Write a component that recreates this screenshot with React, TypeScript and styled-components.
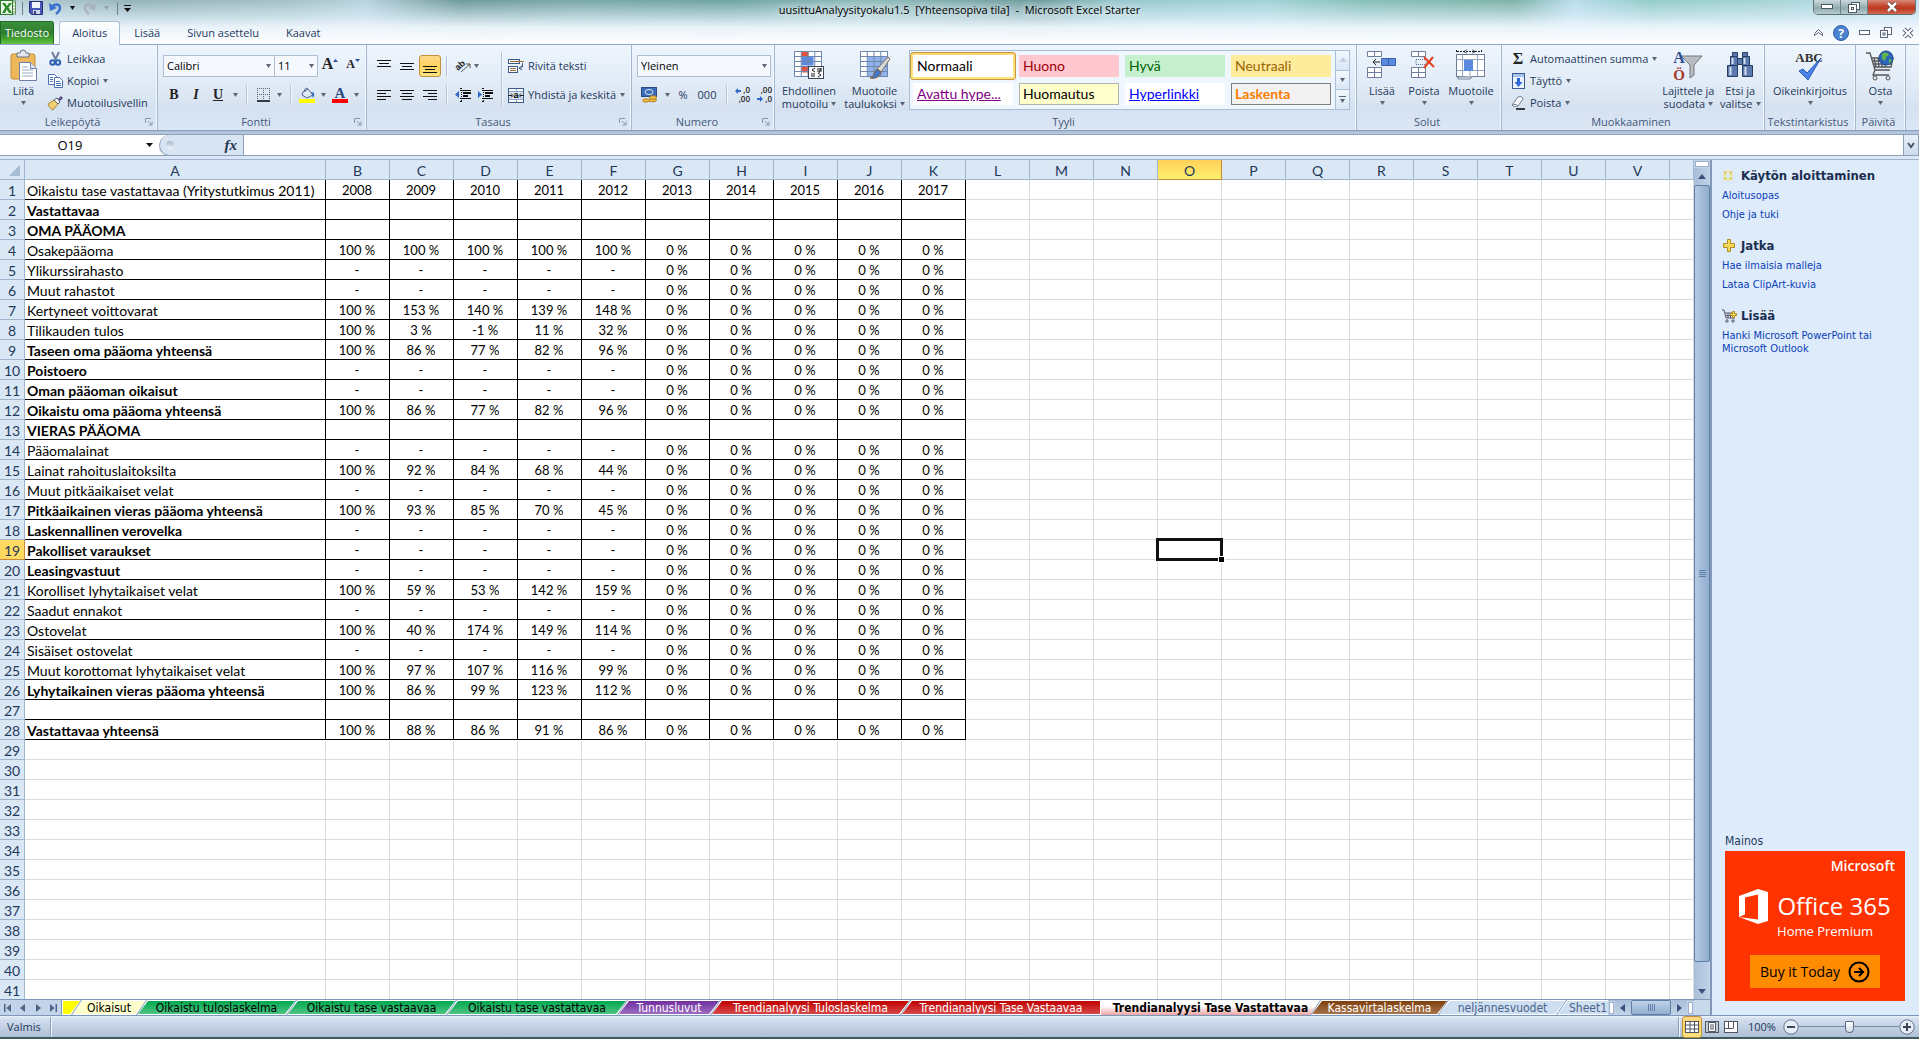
import React from "react";
import styled, { createGlobalStyle, css } from "styled-components";

const UI = `"Open Sans", "Noto Sans", sans-serif`;
const CELL = `Lato, "Open Sans", sans-serif`;
const TAHOMA = `"DejaVu Sans Condensed", "DejaVu Sans", sans-serif`;
const INK = "#1e395b";
const LINE = "#8ba0bc";

const Global = createGlobalStyle`
  *, *::before, *::after { box-sizing: border-box; }
  body { margin: 0; background: #fff; overflow: hidden; }
  button, input, select { font: inherit; color: inherit; margin: 0; padding: 0; border: 0; background: none; }
  svg { display: block; flex: none; overflow: visible; }
`;

const Window = styled.div`
  display: flex;
  flex-direction: column;
  height: 100vh;
  font: 11px/14px ${UI};
  color: ${INK};
`;

/* ---------- title bar and ribbon tabs ---------- */

const Chrome = styled.header`
  flex: none;
  border-bottom: 1px solid #8ea9c9;
  background:
    linear-gradient(to bottom, rgba(255, 255, 255, 0) 0, rgba(225, 240, 252, 0.6) 16px, rgba(240, 247, 254, 0.93) 27px, #fbfdff 42px),
    linear-gradient(to right, #bcd3da 0, #93b3b8 7%, #a3c2c6 15%, #b8d2dd 19%, #6f9a9a 24%, #7aa8a8 30%, #6fa3a3 38%, #8fbcbc 45%, #6d9c9c 54%, #95c8cc 58%, #a3d3d6 66%, #86bfb8 71%, #7fb3a8 79%, #b9dcec 82%, #93ccc8 86%, #a9d5d8 93%, #c5e0f0 100%);
`;

const TitleRow = styled.div`
  display: grid;
  grid-template-columns: 1fr auto 1fr;
  height: 21px;
`;

const Title = styled.h1`
  margin: 0;
  padding-top: 1px;
  font-size: 11px;
  font-weight: 400;
  line-height: 18px;
  color: #000;
  white-space: pre;
  text-shadow: 0 0 8px #fff, 0 0 8px rgba(255, 255, 255, 0.7);
`;

const QuickAccess = styled.div`
  display: flex;
  align-items: center;
  height: 16px;
  gap: 6px;
`;

const Bare = styled.button`
  display: flex;
  align-items: center;
  justify-content: center;
`;

const Step = styled(Bare)`
  width: 9px;
  height: 14px;
`;

const QuickSep = styled.span`
  width: 1px;
  height: 13px;
  background: #6f7f8c;
`;

const WindowButtons = styled.div`
  justify-self: end;
  display: flex;
  height: 15px;
  margin-right: 3px;
  border: 1px solid #5f7178;
  border-top: 0;
  border-radius: 0 0 5px 5px;
  overflow: hidden;
`;

const WindowButton = styled(Bare)<{ $close?: boolean }>`
  width: ${(p) => (p.$close ? 47 : 27)}px;
  border-right: ${(p) => (p.$close ? "0" : "1px solid #6f8289")};
  background: ${(p) =>
    p.$close
      ? "linear-gradient(#d98a78, #c4432b 45%, #b93b22 60%, #d5674a)"
      : "linear-gradient(#c9d8dc, #9fb6b9 45%, #8fa9ac 55%, #b7cbd1)"};
`;

const TabRow = styled.nav`
  display: flex;
  height: 23px;
`;

const RibbonTab = styled.button<{ $kind?: "file" | "active" }>`
  height: 23px;
  padding: 0 13px 0;
  margin-right: 1px;
  line-height: 22px;
  ${(p) =>
    p.$kind === "file" &&
    css`
      padding: 0 4px 0;
      margin-right: 5px;
      border: 1px solid #1f6b26;
      border-bottom: 0;
      border-radius: 0 3px 0 0;
      background: linear-gradient(#3b8f3c, #2d7d2f 50%, #4fae35 85%, #6cc24a);
      color: #fff;
    `}
  ${(p) =>
    p.$kind === "active" &&
    css`
      height: 24px;
      padding: 0 12px 1px;
      border: 1px solid #a9bfd8;
      border-bottom: 0;
      border-radius: 3px 3px 0 0;
      background: linear-gradient(#fdfeff, #eef5fd);
    `}
`;

const TabTools = styled.div`
  display: flex;
  align-items: center;
  gap: 10px;
  margin-left: auto;
  padding-right: 5px;
`;

/* ---------- ribbon ---------- */

const RibbonBar = styled.section`
  display: flex;
  flex: none;
  height: 86px;
  border-bottom: 1px solid #8ba0bc;
  background: linear-gradient(#eef5fd, #e0eaf6 50%, #d5e1f0 75%, #dbe7f5);
`;

const Group = styled.div<{ $w: number }>`
  display: flex;
  flex: none;
  flex-direction: column;
  width: ${(p) => p.$w}px;
  border-right: 1px solid #a3b7d0;
  box-shadow: inset -1px 0 #f3f8fe;
`;

const GroupBody = styled.div<{ $pad?: number }>`
  display: flex;
  height: 69px;
  padding: 3px 0 0 ${(p) => p.$pad ?? 0}px;
`;

const GroupName = styled.div`
  display: flex;
  justify-content: center;
  align-items: center;
  height: 16px;
  padding-right: 4px;
  color: #44587a;
  white-space: nowrap;
`;

const GroupText = styled.span`
  flex: 1;
  text-align: center;
`;

const Column = styled.div<{ $pad?: number; $gap?: number; $left?: number }>`
  display: flex;
  flex-direction: column;
  gap: ${(p) => p.$gap ?? 0}px;
  padding: ${(p) => p.$pad ?? 0}px 0 0 ${(p) => p.$left ?? 0}px;
`;

const Row = styled.div`
  display: flex;
  align-items: center;
  height: 22px;
`;

const BigButton = styled.button<{ $w: number }>`
  display: flex;
  flex: none;
  flex-direction: column;
  align-items: center;
  width: ${(p) => p.$w}px;
  height: 64px;
  padding-top: 2px;
  line-height: 13px;
  white-space: nowrap;
`;

const BigIcon = styled.span`
  display: flex;
  align-items: flex-start;
  height: 34px;
`;

const Inline = styled.span`
  display: flex;
  align-items: center;
  gap: 3px;
`;

const ArrowLine = styled.span`
  display: flex;
  align-items: center;
  height: 11px;
`;

const SmallButton = styled.button`
  display: flex;
  align-items: center;
  height: 22px;
  gap: 4px;
  white-space: nowrap;
`;

const SmallIcon = styled.span`
  display: flex;
  justify-content: center;
  width: 16px;
`;

const Tool = styled.button<{ $on?: boolean; $w?: number; $top?: boolean }>`
  display: flex;
  align-items: ${(p) => (p.$top ? "flex-start" : "center")};
  justify-content: center;
  width: ${(p) => p.$w ?? 22}px;
  height: 22px;
  border: 1px solid ${(p) => (p.$on ? "#c2923a" : "transparent")};
  border-radius: 3px;
  background: ${(p) => (p.$on ? "linear-gradient(#fcd98a, #ffd35a 50%, #ffe583)" : "none")};
`;

const Letter = styled.span<{ $i?: boolean; $u?: boolean; $size?: number }>`
  font: ${(p) => (p.$i ? "italic " : "")}bold ${(p) => p.$size ?? 14}px/16px "Liberation Serif", serif;
  color: #222;
  text-decoration: ${(p) => (p.$u ? "underline" : "none")};
`;

const Divider = styled.span<{ $tall?: boolean }>`
  flex: none;
  width: 1px;
  height: ${(p) => (p.$tall ? 54 : 20)}px;
  margin: ${(p) => (p.$tall ? "4px" : "0")} 5px 0;
  background: #b3c4da;
  box-shadow: 1px 0 #f3f8fe;
`;

const Combo = styled.div<{ $w: number }>`
  position: relative;
  width: ${(p) => p.$w}px;
  height: 22px;
  margin-right: -1px;
  & > svg { position: absolute; right: 4px; top: 9px; pointer-events: none; }
`;

const Select = styled.select`
  width: 100%;
  height: 22px;
  padding: 0 3px;
  appearance: none;
  border: 1px solid #aebfd6;
  background: #f5f9fe;
  color: #000;
`;

const Gallery = styled.div`
  display: flex;
  width: 441px;
  height: 60px;
  border: 1px solid #a9bfd8;
  background: #f0f6fd;
`;

const Swatches = styled.div`
  display: grid;
  flex: 1;
  grid-template-columns: repeat(4, 106px);
  grid-template-rows: 28px 28px;
  padding-top: 1px;
`;

const SwatchButton = styled.button<{ $on?: boolean }>`
  width: 106px;
  height: 28px;
  padding: 2px;
  border: 1px solid ${(p) => (p.$on ? "#c7963f" : "transparent")};
  border-radius: 3px;
  background: ${(p) => (p.$on ? "linear-gradient(#ffd875, #ffe680)" : "none")};
`;

const Swatch = styled.span<{ $bg: string; $fg: string; $edge?: string; $link?: boolean; $bold?: boolean }>`
  display: block;
  height: 22px;
  padding-left: 3px;
  border: 1px solid ${(p) => p.$edge ?? p.$bg};
  background: ${(p) => p.$bg};
  color: ${(p) => p.$fg};
  font: ${(p) => (p.$bold ? 700 : 400)} 14px/19px ${CELL};
  text-align: left;
  text-decoration: ${(p) => (p.$link ? "underline" : "none")};
`;

const GallerySide = styled.div`
  display: flex;
  flex-direction: column;
  width: 14px;
  border-left: 1px solid #a9bfd8;
`;

const GalleryStep = styled(Bare)`
  flex: 1;
  flex-direction: column;
  gap: 2px;
  background: linear-gradient(#f2f8fe, #d9e6f5);
  & + & { border-top: 1px solid #a9bfd8; }
`;

/* ---------- formula bar ---------- */

const FormulaBar = styled.section`
  display: flex;
  flex: none;
  height: 29px;
  padding: 4px 0 3px;
  background: linear-gradient(#a9bcd5 0, #bccbe0 3px, ${LINE} 3px, ${LINE} 4px, #dbe7f5 4px);
  border-bottom: 1px solid #9eb0cf;
`;

const NameBox = styled.div`
  display: flex;
  align-items: center;
  width: 168px;
  border-bottom: 1px solid ${LINE};
  background: #fff;
`;

const NameInput = styled.input`
  width: 146px;
  padding-right: 6px;
  text-align: center;
  font-size: 13px;
  color: #000;
`;

const FxArea = styled.div`
  display: flex;
  align-items: center;
  justify-content: space-between;
  width: 85px;
  margin-left: -9px;
  padding: 0 6px;
  border: 1px solid ${LINE};
  border-width: 0 1px 1px;
  border-radius: 11px 0 0 11px;
  background: #d8e4f2;
`;

const Knob = styled.span`
  width: 8px;
  height: 8px;
  border-radius: 50%;
  background: linear-gradient(#a9b9cc, #eef4fb);
`;

const Fx = styled.button`
  font: italic bold 15px/18px "Liberation Serif", serif;
  color: #22344f;
`;

const FormulaInput = styled.input`
  flex: 1;
  min-width: 0;
  border-bottom: 1px solid ${LINE};
  background: #fff;
`;

const Expand = styled(Bare)`
  width: 16px;
  border: 1px solid ${LINE};
  border-top: 0;
  background: linear-gradient(#e7f0fa, #cddbec);
`;

/* ---------- worksheet ---------- */

const Main = styled.main`
  display: flex;
  flex: 1;
  min-height: 0;
`;

const Book = styled.div`
  display: flex;
  flex: 1;
  flex-direction: column;
  min-width: 0;
`;

const SheetArea = styled.div`
  display: flex;
  flex: 1;
  min-height: 0;
`;

const SheetView = styled.div`
  flex: 1;
  min-width: 0;
  overflow: hidden;
`;

const Sheet = styled.table`
  width: 100%;
  table-layout: fixed;
  border-collapse: separate;
  border-spacing: 0;
  font: 14px/17px ${CELL};
  color: #000;
`;

const ColHead = styled.th<{ $on?: boolean }>`
  height: 20px;
  padding: 2px 0 0;
  font-weight: 400;
  color: ${INK};
  border-right: 1px solid ${(p) => (p.$on ? "#c8893a" : "#9eb6ce")};
  border-bottom: 1px solid ${(p) => (p.$on ? "#c8893a" : "#9eb6ce")};
  background: ${(p) => (p.$on ? "linear-gradient(#ffd05a, #fff06e)" : "#dae7f5")};
`;

const RowHead = styled(ColHead)`
  background: ${(p) => (p.$on ? "#ffd960" : "#dae7f5")};
`;

const Cell = styled.td<{ $ink?: boolean; $inkRight?: boolean; $label?: boolean; $bold?: boolean }>`
  position: relative;
  height: 20px;
  padding: ${(p) => (p.$label ? "2px 0 0 2px" : "2px 1px 0 0")};
  border-bottom: 1px solid ${(p) => (p.$ink ? "#000" : "#dadcdd")};
  border-right: 1px solid ${(p) => (p.$inkRight ? "#000" : "#dadcdd")};
  text-align: ${(p) => (p.$label ? "left" : "center")};
  font-weight: ${(p) => (p.$bold ? 700 : 400)};
  font-size: ${(p) => (p.$label ? 14 : 13)}px;
  white-space: nowrap;
`;

const Cursor = styled.span`
  position: absolute;
  z-index: 1;
  inset: -2px;
  border: 3px solid #111;
  &::after {
    content: "";
    position: absolute;
    right: -5px;
    bottom: -5px;
    width: 7px;
    height: 7px;
    border: 1px solid #fff;
    background: #000;
  }
`;

const ScrollTrack = styled.div`
  display: flex;
  flex: none;
  flex-direction: column;
  width: 16px;
  background: linear-gradient(to right, #a8bed9, #c3d3e8);
`;

const SplitBox = styled.span<{ $v?: boolean }>`
  flex: none;
  width: ${(p) => (p.$v ? 7 : 16)}px;
  height: ${(p) => (p.$v ? 14 : 8)}px;
  border: 1px solid #c2d1e6;
  background: #fff;
  box-shadow: inset 0 0 0 1px #9db0c8;
`;

const ScrollArrow = styled(Bare)`
  flex: none;
  width: 16px;
  height: 17px;
`;

const ScrollThumb = styled.div`
  display: flex;
  flex: 1;
  flex-direction: column;
  align-items: center;
  justify-content: center;
  gap: 1px;
  margin-bottom: 20px;
  border: 1px solid #5f7fa8;
  border-radius: 2px;
  background: linear-gradient(to right, #b5cbe3, #8fadcd);
`;

const Grip = styled.i<{ $v?: boolean }>`
  width: ${(p) => (p.$v ? 1 : 7)}px;
  height: ${(p) => (p.$v ? 7 : 1)}px;
  background: #5f7fa8;
`;

const TabBar = styled.div`
  display: flex;
  flex: none;
  height: 16px;
  border-top: 1px solid #7d97b8;
  background: #c3d4ea;
`;

const TabNav = styled.div`
  display: flex;
  flex: none;
  width: 62px;
  border-right: 1px solid #7d97b8;
`;

const NavButton = styled(Bare)`
  flex: 1;
`;

const Tabs = styled.div`
  display: flex;
  flex: 1;
  min-width: 0;
  overflow: hidden;
  background: #7d97b8;
`;

type TabShape = { $w: number; $c: string; $fg: string; $from?: boolean; $end?: boolean; $active?: boolean };

const slant = (p: TabShape) =>
  `polygon(${p.$from ? "0 0" : "10px 0"}, 100% 0, ${p.$end ? "100%" : "calc(100% - 10px)"} 100%, 0 100%)`;

const SheetTab = styled.button<TabShape>`
  position: relative;
  z-index: 0;
  flex: none;
  width: ${(p) => p.$w}px;
  height: 15px;
  margin-right: ${(p) => (p.$end ? 0 : -9)}px;
  padding-top: 1px;
  font: ${(p) => (p.$active ? 700 : 400)} 12px/14px ${TAHOMA};
  color: ${(p) => p.$fg};
  text-align: center;
  white-space: nowrap;
  background: #fff;
  clip-path: ${slant};
  &::before {
    content: "";
    position: absolute;
    z-index: -1;
    inset: ${(p) => (p.$active ? "0" : "1px 1px")};
    clip-path: ${slant};
    background: ${(p) => p.$c};
  }
`;

const HScroll = styled.div`
  display: flex;
  flex: none;
  align-items: center;
  width: 86px;
  background: linear-gradient(#a8bed9, #c3d3e8);
`;

const HThumb = styled.div`
  display: flex;
  flex: 1;
  align-items: center;
  justify-content: center;
  gap: 1px;
  height: 15px;
  border: 1px solid #5f7fa8;
  border-radius: 2px;
  background: linear-gradient(#c0d2e8, #94b0cf);
`;

const Corner = styled.div`
  flex: none;
  width: 16px;
  background: #c9d9ec;
`;

/* ---------- side pane ---------- */

const Pane = styled.aside`
  display: flex;
  flex: none;
  flex-direction: column;
  width: 209px;
  padding: 6px 0 14px 10px;
  border-left: 2px solid #8398b8;
  background: #deebfb;
  font-family: ${TAHOMA};
  font-size: 11px;
`;

const PaneSection = styled.section`
  margin-bottom: 12px;
`;

const PaneTitle = styled.h2`
  display: flex;
  align-items: center;
  gap: 3px;
  height: 20px;
  margin: 0;
  font-size: 13px;
  font-weight: 700;
  color: #1b2f50;
`;

const PaneLink = styled.a`
  display: block;
  width: 160px;
  padding: 3px 0;
  line-height: 13px;
  color: #0b3fb8;
  text-decoration: none;
`;

const AdNote = styled.p`
  margin: auto 0 3px 3px;
  line-height: 14px;
  font-size: 12px;
`;

const Ad = styled.section`
  display: flex;
  flex: none;
  flex-direction: column;
  align-items: center;
  width: 180px;
  height: 150px;
  margin-left: 3px;
  padding: 6px 10px 13px;
  background: #ff3300;
  color: #fff;
  font-family: ${UI};
`;

const AdBrand = styled.span`
  align-self: flex-end;
  font-size: 14px;
  font-weight: 600;
  line-height: 18px;
`;

const AdName = styled.div`
  display: flex;
  align-items: center;
  gap: 9px;
  height: 36px;
  margin-top: 13px;
  font-size: 24px;
  font-weight: 400;
  line-height: 32px;
  white-space: nowrap;
`;

const AdSub = styled.span`
  font-size: 13px;
  line-height: 15px;
  margin-left: 20px;
`;

const AdButton = styled.button`
  display: flex;
  align-items: center;
  justify-content: center;
  gap: 8px;
  width: 130px;
  height: 33px;
  margin-top: auto;
  background: #ff8c00;
  color: #000;
  font-size: 14px;
`;

/* ---------- status bar ---------- */

const StatusBar = styled.footer`
  display: flex;
  flex: none;
  align-items: center;
  height: 24px;
  padding: 1px 4px 1px 7px;
  border-top: 1px solid #7d97b8;
  border-bottom: 2px solid #3f5a5c;
  background: linear-gradient(#e9f1fa 0, #d3dfee 3px, #bccbdf 14px, #afbfd5);
`;

const StatusSep = styled.span`
  width: 2px;
  height: 20px;
  margin-left: 9px;
  border-left: 1px solid #8ba0bc;
  border-right: 1px solid #eef4fb;
`;

const Views = styled.div`
  display: flex;
  align-items: center;
  margin-left: auto;
  & > ${StatusSep} { margin: 0 2px 0 0; }
`;

const Percent = styled.span`
  width: 43px;
  padding-left: 8px;
`;

const Slider = styled.input`
  width: 100px;
  height: 18px;
  appearance: none;
  background: linear-gradient(#7288a6, #7288a6) center / 100% 1px no-repeat;
  &::-webkit-slider-thumb {
    appearance: none;
    width: 9px;
    height: 12px;
    border: 1px solid #5b6d87;
    border-radius: 1px 1px 4px 4px;
    background: linear-gradient(#fff, #cfdbea);
  }
`;

/* ---------- icons ---------- */

const Down = ({ c = "#5a6678", w = 5 }: { c?: string; w?: number }) => (
  <svg width={w} height="4" viewBox="0 0 6 4" preserveAspectRatio="none"><path d="M0 0h6L3 4z" fill={c} /></svg>
);

const Tri = ({ d, c = "#3b4f7c" }: { d: "u" | "d" | "l" | "r"; c?: string }) => {
  const p = { u: "M0 6h8L4 1z", d: "M0 2h8L4 7z", l: "M6 0v8L1 4z", r: "M2 0v8l5-4z" }[d];
  return <svg width="8" height="8"><path d={p} fill={c} /></svg>;
};

const SizeMark = ({ up }: { up?: boolean }) => (
  <svg width="5" height="8"><path d={up ? "M0 6h5L2.500 3z" : "M0 3h5L2.500 6z"} fill="#2f4f9c" /></svg>
);

const Launcher = () => (
  <svg width="8" height="8" fill="none" stroke="#8797b0"><path d="M.5 5V.5H6M3 3l3.500 3.500M7 3.500v3.500H3.500" /></svg>
);

const ExcelIcon = () => (
  <svg width="16" height="16">
    <rect x="4" y="1" width="11.500" height="13" fill="#f4f8f2" stroke="#5f8f5b" />
    <path d="M12 3h3M12 6h3M12 9h3M12 12h3" stroke="#7fae7a" />
    <rect x=".5" y=".5" width="12" height="14" fill="#e9f4e4" stroke="#2f7a2f" />
    <path d="M2 3h3l2 3 2-3h3L8.500 7.500 12 13H9L6.800 9.500 5 13H2l3.200-5.500z" fill="#2c8a2c" />
  </svg>
);

const SaveIcon = () => (
  <svg width="14" height="14">
    <path d="M.5.5h13v13h-11l-2-2z" fill="#4a55b8" stroke="#2a2f7a" />
    <rect x="3" y="1" width="8" height="6" fill="#f2f4fb" /><rect x="4" y="9" width="7" height="4" fill="#cfd5ea" /><rect x="5" y="10" width="2" height="3" fill="#333a7a" />
  </svg>
);

const UndoIcon = ({ c }: { c: string }) => (
  <svg width="13" height="13"><path d="M3 5c3-4 8-3 8 1 0 3-2 4-4 6" fill="none" stroke={c} strokeWidth="2.500" /><path d="M0 1l1 8 7-3z" fill={c} /></svg>
);

const RedoIcon = () => (
  <svg width="13" height="13"><path d="M10 5C7 1 2 2 2 6c0 3 2 4 4 6" fill="none" stroke="#a9b4bf" strokeWidth="2.500" /><path d="M13 1l-1 8-7-3z" fill="#a9b4bf" /></svg>
);

const PasteIcon = () => (
  <svg width="28" height="31">
    <rect x="1" y="4" width="24" height="25" rx="2" fill="#efb75b" stroke="#c88d35" />
    <path d="M7 3h3a3 3 0 016 0h3v4H7z" fill="#dfe5ea" stroke="#6a7480" />
    <path d="M9.500 12.500h11l6 6v12h-17z" fill="#fff" stroke="#6d7fa0" />
    <path d="M20.500 12.500v6h6" fill="#dce6f4" stroke="#6d7fa0" />
    <path d="M12 17h6M12 20h11M12 23h11M12 26h11" stroke="#9aabc6" />
  </svg>
);

const CutIcon = () => (
  <svg width="15" height="14" fill="none"><path d="M4 0l4 8M11 0L7 8" stroke="#6d7f9b" strokeWidth="2" /><circle cx="4.500" cy="10.500" r="2.200" stroke="#2d62b5" strokeWidth="2" /><circle cx="10" cy="10.500" r="2.200" stroke="#2d62b5" strokeWidth="2" /></svg>
);

const CopyIcon = () => (
  <svg width="15" height="14" fill="#fff" stroke="#4a6fae"><path d="M.5.500h6l2 2v8h-8z" /><path d="M6.500 3.500h5l3 3v7h-8z" /><path d="M2 3.500h3M2 5.500h3M2 7.500h3M8 7.500h4M8 9.500h5M8 11.500h5" /></svg>
);

const BrushIcon = () => (
  <svg width="15" height="14"><path d="M0 8l6-4 4 4-5 6c-2-1-4-3-5-6z" fill="#f0cf6e" stroke="#a58536" /><path d="M6 4l3-2 3 4-2 2z" fill="#fff" stroke="#555d6b" /><path d="M10 3l3-3 2 2-3 3z" fill="#5a4a8a" /></svg>
);

const AlignIcon = ({ k }: { k: string }) => {
  const m: Record<string, [number[][], number]> = {
    t: [[[0, 14], [2, 10], [0, 14]], 1],
    m: [[[0, 14], [2, 10], [0, 14]], 4],
    b: [[[0, 14], [2, 10], [0, 14]], 7],
    l: [[[0, 14], [0, 9], [0, 14], [0, 9]], 2],
    c: [[[0, 14], [2, 10], [0, 14], [2, 10]], 2],
    r: [[[0, 14], [5, 9], [0, 14], [5, 9]], 2],
  };
  const [rows, y] = m[k];
  return <svg width="14" height="14" fill="#111">{rows.map(([x, l], i) => <rect key={i} x={x} y={y + i * 3} width={l} height="1" />)}</svg>;
};

const IndentIcon = ({ out }: { out?: boolean }) => (
  <svg width="16" height="14" fill="none">
    <path d="M5 .5h2M5 13.500h2M5 2.500h11M8 5h8M8 8h5M5 10.500h11" stroke="#111" />
    <path d="M8 5h8M8 8h5" stroke="#111" strokeWidth="2" />
    <path d="M6.500 0v14" stroke="#111" strokeDasharray="1 1" />
    <path d={out ? "M4 3v7L0 6.500z" : "M1 3v7l4-3.500z"} fill="#2f67c9" />
  </svg>
);

const OrientIcon = () => (
  <svg width="17" height="14"><text x="1" y="9" transform="rotate(-42 6 8)" fontFamily="Liberation Sans" fontSize="9" fontWeight="700" fill="#222">ab</text><path d="M6 13l9-8M15 9V5h-4" fill="none" stroke="#555" /></svg>
);

const WrapIcon = () => (
  <svg width="16" height="16" fill="none"><rect x=".5" y="1.500" width="11" height="4" fill="#fff" stroke="#3c5a86" /><rect x=".5" y="8.500" width="9" height="6" fill="#fff" stroke="#3c5a86" /><path d="M2 3.500h14M2 10.500h6M2 12.500h6" stroke="#9a6a34" /><path d="M14.500 5v4l-2 1.500M14 8l-3 2 3 2" stroke="#3c5a86" /></svg>
);

const MergeIcon = () => (
  <svg width="16" height="15"><rect x=".5" y=".5" width="15" height="14" fill="#fff" stroke="#3c5a86" /><path d="M1 3.500h14M1 11.500h14M8.500 1v3M8.500 11v3" stroke="#8ba6cf" /><rect x="1" y="4" width="14" height="7" fill="#d9e4f4" /><path d="M0 7.500h4M12 7.500h4M3 5.500l2 2-2 2M13 5.500l-2 2 2 2" fill="none" stroke="#222" /><text x="5.500" y="10" fontFamily="Liberation Sans" fontSize="9" fontWeight="700">a</text></svg>
);

const BordersIcon = () => (
  <svg width="13" height="14" fill="none" stroke="#5a6678"><path strokeDasharray="1 1" d="M.5 0v12M6.500 0v12M12.500 0v12M0 .5h13M0 6.500h13" /><path d="M0 13h13" stroke="#000" strokeWidth="1.500" /></svg>
);

const FillIcon = () => (
  <svg width="16" height="16"><path d="M4 5l5-3 5 6-6 3-5-3z" fill="#dfe9f6" stroke="#49608a" /><path d="M6 5c-1-3 1-5 3-3" fill="none" stroke="#49608a" /><path d="M12 5c4 0 4 3 2 6z" fill="#3b6fbe" /><rect y="12" width="16" height="4" fill="#ffff00" /></svg>
);

const FontColorIcon = () => (
  <svg width="16" height="16"><text x="8" y="11" textAnchor="middle" fontFamily="Liberation Serif" fontSize="15" fontWeight="700" fill="#2c4a80">A</text><rect y="12" width="16" height="4" fill="#f00" /></svg>
);

const CurrencyIcon = () => (
  <svg width="17" height="16"><rect x=".5" y=".5" width="15" height="9" fill="#3a6cb8" stroke="#274b86" /><ellipse cx="8" cy="5" rx="4" ry="2.500" fill="none" stroke="#dbe7f7" /><g fill="#f2c14b" stroke="#b07d1e"><ellipse cx="11.500" cy="13" rx="4" ry="1.800" /><ellipse cx="12" cy="10.500" rx="3.500" ry="1.800" /><ellipse cx="5" cy="13.500" rx="3.500" ry="1.600" /></g></svg>
);

const DecIcon = ({ more }: { more?: boolean }) => (
  <svg width="16" height="16" fontFamily="Open Sans" fontSize="8" fontWeight="600" fill="#222">
    <text x="15" y="6" textAnchor="end">{more ? ",0" : ",00"}</text>
    <text x="15" y="15" textAnchor="end">{more ? ",00" : ",0"}</text>
    <path d={more ? "M0 4l3-3v2h3v2H3v2z" : "M6 12l-3-3v2H0v2h3v2z"} fill="#2f67c9" />
  </svg>
);

const grid = (x0: number, x1: number, y0: number, y1: number, dx: number, dy: number) => {
  let d = "";
  for (let x = x0; x <= x1; x += dx) d += `M${x} ${y0}V${y1}`;
  for (let y = y0; y <= y1; y += dy) d += `M${x0} ${y}H${x1}`;
  return d;
};

const CondIcon = () => (
  <svg width="30" height="30"><rect x=".5" y="1.500" width="27" height="25" fill="#fff" /><path d="M7.500 1.500h7v5h-7zM7.500 16.500h14v6h-14z" fill="#e8503a" /><path d="M7.500 6.500h12v9h-12z" fill="#5b8be0" /><path d={grid(0.5, 28, 1.5, 26.5, 6.75, 5)} fill="none" stroke="#6f87ae" /><rect x="14.500" y="16.500" width="15" height="12" fill="#f7f9fc" stroke="#3d4656" /><path d="M21 18l-3 2 3 2M17 24h4M17 26h4M23 19h5M23 21h5M27 18l-2 5M24 23l3 2-3 2" fill="none" stroke="#222" /></svg>
);

const TableIcon = () => (
  <svg width="30" height="30"><rect x=".5" y="1.500" width="27" height="25" fill="#fff" /><rect x="7.500" y="6.500" width="20" height="20" fill="#8fb3ea" /><path d={grid(0.5, 28, 1.5, 26.5, 6.75, 5)} fill="none" stroke="#6f87ae" /><path d="M28 7l2 2-9 13-4-3z" fill="#d8d8d8" stroke="#7c7466" /><path d="M17 19l4 3c-2 6-7 7-11 6 4-1 4-6 7-9z" fill="#3c76cf" stroke="#8a5a2c" /></svg>
);

const InsertIcon = () => (
  <svg width="30" height="30" fill="#fff" stroke="#6d7f9b"><path d="M.5 1.500h14v5H.5zM7.500 1.500v5M.5 17.500h14v10H.5zM7.500 17.500v10M.5 22.500h14" /><path d="M14.500 8.500h14v7h-14z" fill="#5b8be0" stroke="#3a5fa8" /><path d="M21.500 8.500v7" stroke="#3a5fa8" /><path d="M6 12h7M9 9l-3 3 3 3" fill="none" stroke="#222" /></svg>
);

const DeleteIcon = () => (
  <svg width="26" height="30" fill="#fff" stroke="#6d7f9b"><path d="M.5 1.500h14v5H.5zM7.500 1.500v5M.5 17.500h14v10H.5zM7.500 17.500v10M.5 22.500h14" /><path d="M5 9.500h10v5H5z" fill="none" strokeDasharray="1 1" stroke="#5b6c8c" /><path d="M13 7l10 10M22 7L13 18" fill="none" stroke="#ea3f22" strokeWidth="2" /></svg>
);

const FormatIcon = () => (
  <svg width="30" height="31"><rect x=".5" y="4.500" width="28" height="22" fill="#fff" stroke="#6d7f9b" /><path d="M6.500 4.500v22M21.500 4.500v22M.5 9.500h28M.5 20.500h28M14 20v6" stroke="#93a4bf" /><rect x="8" y="10" width="9" height="11" fill="#5b8be0" /><path d="M2 27v2h12l2-2v-1M1 27h15" stroke="#6d7f9b" fill="#fff" /><path d="M1 1.500h24M.5 0v3M25.500 0v3M8 1.500l3-2M8 1.500l3 2M19 1.500l-3-2M19 1.500l-3 2" stroke="#222" strokeDasharray="2 1" /></svg>
);

const FillDownIcon = () => (
  <svg width="13" height="16"><rect x=".5" y=".5" width="12" height="15" fill="#eaf2fd" stroke="#3c5a96" /><rect x="1" y="1" width="11" height="3" fill="#a9c4ec" /><path d="M5 5h3v4h2.500L6.500 14l-4-5H5z" fill="#2f67d9" /></svg>
);

const EraserIcon = () => (
  <svg width="14" height="14"><path d="M1 9l6-8c3-1 5 0 5 2l-5 7c-2 1-5 1-6-1z" fill="#f6f8fb" stroke="#6f7c90" /><path d="M1 9c2-1 4-1 6 1" fill="none" stroke="#6f7c90" /><path d="M5 13h9" stroke="#000" strokeWidth="1.500" /></svg>
);

const SortIcon = () => (
  <svg width="30" height="31"><path d="M8 6h21l-8 9v10l-4 3V15z" fill="#b9bcc0" stroke="#74777d" /><text x="6" y="13" textAnchor="middle" fontFamily="Liberation Serif" fontSize="16" fontWeight="700" fill="#2c4f94">A</text><text x="6" y="30" textAnchor="middle" fontFamily="Liberation Serif" fontSize="15" fontWeight="700" fill="#a63a30">Ö</text></svg>
);

const FindIcon = () => (
  <svg width="28" height="28" fill="#5a7ab0" stroke="#2a3d63"><path d="M6.500 2.500h5v4h-5zM16.500 2.500h5v4h-5z" /><path d="M4.500 6.500h7v9h-7zM16.500 6.500h7v9h-7z" /><rect x="11.500" y="8.500" width="5" height="6" /><path d="M1.500 15.500h10v11h-10zM16.500 15.500h10v11h-10z" /><path d="M4.500 17v8M19.500 17v8M6.500 8v6M18.500 8v6" stroke="#d3e0f4" strokeWidth="2" /></svg>
);

const SpellIcon = () => (
  <svg width="30" height="31"><text x="14" y="12" textAnchor="middle" fontFamily="Liberation Serif" fontSize="13" fontWeight="700" fill="#333">ABC</text><path d="M4 21l4-2 4 4L26 8 13 30z" fill="#4d82e8" stroke="#2a59b5" /></svg>
);

const CartIcon = () => (
  <svg width="30" height="31" fill="none" stroke="#555"><path d="M0 3h4l5 17h15M5 8h22l-2 9H8M8 8l2 9M12 8l1 9M16 8v9M20 8l-1 9M7 11h19M8 14h18M9 20l-2 5h16" strokeWidth="1.300" /><circle cx="9" cy="28" r="2" /><circle cx="22" cy="28" r="2" /><circle cx="20" cy="8" r="7" fill="#2d66b8" stroke="#1c4a8a" /><path d="M16 4c3-3 6-1 7 1l-3 2-1 4-3-2zM23 9l3 1-3 4z" fill="#5fb54a" stroke="none" /></svg>
);

const SunIcon = () => (
  <svg width="16" height="12" strokeWidth="2"><g stroke="#efe08a"><path d="M6 0v3M6 8v3M1 5.500h3M8 5.500h3" /></g><path d="M2 1.500l2 2M8 7.500l2 2M2 9.500l2-2M8 3.500l2-2" stroke="#e0c93c" /></svg>
);

const PlusIcon = () => (
  <svg width="16" height="14"><path d="M5.500.5h3v4h4v4h-4v4h-3v-4h-4v-4h4z" fill="#f6d855" stroke="#b08c2a" /></svg>
);

const SmallCartIcon = () => (
  <svg width="16" height="14" fill="none" stroke="#556"><path d="M0 1h2l2 8h9M3 4h8M4 6.500h7M6 4v5M8.500 4v5" /><circle cx="5" cy="12" r="1.200" /><circle cx="11" cy="12" r="1.200" /><path d="M10.500 2.500h2v2h2v2h-2v2h-2v-2h-2v-2h2z" fill="#f6d855" stroke="#b08c2a" /></svg>
);

const OfficeIcon = () => (
  <svg width="29" height="35"><path fillRule="evenodd" d="M0 7L19 0l10 3v29l-10 3L0 28l19 2.500V5.500L6 8.500v17L0 28z" fill="#fff" /></svg>
);

const GoIcon = () => (
  <svg width="22" height="22" fill="none" stroke="#000" strokeWidth="2"><circle cx="11" cy="11" r="9.500" /><path d="M6 11h10M11 7l4 4-4 4" /></svg>
);

const ViewIcon = ({ k }: { k: number }) => (
  <svg width="14" height="12" fill="#fff" stroke="#4f5560">
    <rect x=".5" y=".5" width="13" height="11" />
    {k === 0 && <path d="M0 4h14M0 8h14M5 0v12M9.500 0v12" />}
    {k === 1 && <><rect x=".5" y=".5" width="13" height="11" fill="#c8ccd2" /><path d="M3.500 1.500h7v9h-7zM5 4h4M5 6h4M5 8h4" /></>}
    {k === 2 && <path d="M4.500 0v7M9.500 0v7M4.500 7.500h5M0 7.500h5" />}
  </svg>
);

const ZoomIcon = ({ plus }: { plus?: boolean }) => (
  <svg width="16" height="16" fill="none"><circle cx="8" cy="8" r="7.200" fill="#e6edf6" stroke="#62748e" /><path d={plus ? "M4 8h8M8 4v8" : "M4 8h8"} stroke="#3c4656" strokeWidth="2" /></svg>
);

/* ---------- data ---------- */

const COLS = "ABCDEFGHIJKLMNOPQRSTUV".split("");
const Z = "0 %";
const D = "-";
const vals = (a: string[]) => [...a, Z, Z, Z, Z, Z];
const none: string[] = Array(10).fill("");
const dash = vals([D, D, D, D, D]);
const pct = (...n: number[]) => vals(n.map((v) => `${v} %`));

const ROWS: { t: string; b?: boolean; v: string[] }[] = [
  { t: "Oikaistu tase vastattavaa (Yritystutkimus 2011)", v: ["2008", "2009", "2010", "2011", "2012", "2013", "2014", "2015", "2016", "2017"] },
  { t: "Vastattavaa", b: true, v: none },
  { t: "OMA PÄÄOMA", b: true, v: none },
  { t: "Osakepääoma", v: pct(100, 100, 100, 100, 100) },
  { t: "Ylikurssirahasto", v: dash },
  { t: "Muut rahastot", v: dash },
  { t: "Kertyneet voittovarat", v: pct(100, 153, 140, 139, 148) },
  { t: "Tilikauden tulos", v: pct(100, 3, -1, 11, 32) },
  { t: "Taseen oma pääoma yhteensä", b: true, v: pct(100, 86, 77, 82, 96) },
  { t: "Poistoero", b: true, v: dash },
  { t: "Oman pääoman oikaisut", b: true, v: dash },
  { t: "Oikaistu oma pääoma yhteensä", b: true, v: pct(100, 86, 77, 82, 96) },
  { t: "VIERAS PÄÄOMA", b: true, v: none },
  { t: "Pääomalainat", v: dash },
  { t: "Lainat rahoituslaitoksilta", v: pct(100, 92, 84, 68, 44) },
  { t: "Muut pitkäaikaiset velat", v: dash },
  { t: "Pitkäaikainen vieras pääoma yhteensä", b: true, v: pct(100, 93, 85, 70, 45) },
  { t: "Laskennallinen verovelka", b: true, v: dash },
  { t: "Pakolliset varaukset", b: true, v: dash },
  { t: "Leasingvastuut", b: true, v: dash },
  { t: "Korolliset lyhytaikaiset velat", v: pct(100, 59, 53, 142, 159) },
  { t: "Saadut ennakot", v: dash },
  { t: "Ostovelat", v: pct(100, 40, 174, 149, 114) },
  { t: "Sisäiset ostovelat", v: dash },
  { t: "Muut korottomat lyhytaikaiset velat", v: pct(100, 97, 107, 116, 99) },
  { t: "Lyhytaikainen vieras pääoma yhteensä", b: true, v: pct(100, 86, 99, 123, 112) },
  { t: "", v: none },
  { t: "Vastattavaa yhteensä", b: true, v: pct(100, 88, 86, 91, 86) },
];

const GREEN = "linear-gradient(#00a94f, #4fc383)";
const RED = "linear-gradient(#c00000, #d64a4a)";
const TABS: { n: string; w: number; c: string; fg: string; from?: boolean; end?: boolean; active?: boolean }[] = [
  { n: "", w: 19, c: "#ffff00", fg: "#000", from: true },
  { n: "Oikaisut", w: 74, c: "#ffffcc", fg: "#000" },
  { n: "Oikaistu tuloslaskelma", w: 159, c: GREEN, fg: "#000" },
  { n: "Oikaistu tase vastaavaa", w: 169, c: GREEN, fg: "#000" },
  { n: "Oikaistu tase vastattavaa", w: 180, c: GREEN, fg: "#000" },
  { n: "Tunnusluvut", w: 102, c: "linear-gradient(#7030a0, #9d6cc0)", fg: "#fff" },
  { n: "Trendianalyysi Tuloslaskelma", w: 199, c: RED, fg: "#fff" },
  { n: "Trendianalyysi Tase Vastaavaa", w: 200, c: RED, fg: "#fff", end: true },
  { n: "Trendianalyysi Tase Vastattavaa", w: 219, c: "linear-gradient(#fff 40%, #eda5a5)", fg: "#000", from: true, active: true },
  { n: "Kassavirtalaskelma", w: 137, c: "linear-gradient(#7f3f0c, #a5744c)", fg: "#fff" },
  { n: "neljännesvuodet", w: 127, c: "#cfdff2", fg: "#4a6288" },
  { n: "Sheet1", w: 62, c: "#cfdff2", fg: "#4a6288", end: true },
];

const STYLES = [
  { n: "Normaali", bg: "#fff", fg: "#000", on: true },
  { n: "Huono", bg: "#ffc7ce", fg: "#9c0006" },
  { n: "Hyvä", bg: "#c6efce", fg: "#006100" },
  { n: "Neutraali", bg: "#ffeb9c", fg: "#9c6500" },
  { n: "Avattu hype...", bg: "#fff", fg: "#800080", link: true },
  { n: "Huomautus", bg: "#ffffcc", fg: "#000", edge: "#b2b2b2" },
  { n: "Hyperlinkki", bg: "#fff", fg: "#0000ff", link: true },
  { n: "Laskenta", bg: "#f2f2f2", fg: "#fa7d00", edge: "#7f7f7f", bold: true },
];

/* ---------- parts ---------- */

const RibbonGroup = ({ w, name, pad, more, children }: { w: number; name: string; pad?: number; more?: boolean; children: React.ReactNode }) => (
  <Group $w={w}>
    <GroupBody $pad={pad}>{children}</GroupBody>
    <GroupName>
      <GroupText>{name}</GroupText>
      {more && <Bare aria-label={`${name}: lisää`}><Launcher /></Bare>}
    </GroupName>
  </Group>
);

const Big = ({ w, icon, a, b }: { w: number; icon: React.ReactNode; a: string; b?: string }) => (
  <BigButton $w={w}>
    <BigIcon>{icon}</BigIcon>
    <span>{a}</span>
    {b ? <Inline>{b}<Down /></Inline> : <ArrowLine><Down /></ArrowLine>}
  </BigButton>
);

const Ribbon = () => (
  <RibbonBar>
    <RibbonGroup w={158} name="Leikepöytä" more>
      <Big w={47} icon={<PasteIcon />} a="Liitä" />
      <Column>
        <SmallButton><SmallIcon><CutIcon /></SmallIcon>Leikkaa</SmallButton>
        <SmallButton><SmallIcon><CopyIcon /></SmallIcon>Kopioi<Down /></SmallButton>
        <SmallButton><SmallIcon><BrushIcon /></SmallIcon>Muotoilusivellin</SmallButton>
      </Column>
    </RibbonGroup>

    <RibbonGroup w={209} name="Fontti" pad={5} more>
      <Column $pad={7} $gap={7}>
        <Row>
          <Combo $w={112}><Select aria-label="Fontti"><option>Calibri</option></Select><Down /></Combo>
          <Combo $w={44}><Select aria-label="Fonttikoko"><option>11</option></Select><Down /></Combo>
          <Tool $w={26} $top aria-label="Suurenna fonttia"><Letter $size={16}>A</Letter><SizeMark up /></Tool>
          <Tool $w={20} $top aria-label="Pienennä fonttia"><Letter $size={12}>A</Letter><SizeMark /></Tool>
        </Row>
        <Row>
          <Tool aria-label="Lihavoi"><Letter>B</Letter></Tool>
          <Tool aria-label="Kursivoi"><Letter $i>I</Letter></Tool>
          <Tool aria-label="Alleviivaa"><Letter $u>U</Letter></Tool>
          <Tool $w={12} aria-label="Alleviivaus"><Down /></Tool>
          <Divider />
          <Tool aria-label="Reunat"><BordersIcon /></Tool>
          <Tool $w={11} aria-label="Reunavalinnat"><Down /></Tool>
          <Divider />
          <Tool aria-label="Täyttöväri"><FillIcon /></Tool>
          <Tool $w={11} aria-label="Täyttövärit"><Down /></Tool>
          <Tool aria-label="Fontin väri"><FontColorIcon /></Tool>
          <Tool $w={11} aria-label="Fonttivärit"><Down /></Tool>
        </Row>
      </Column>
    </RibbonGroup>

    <RibbonGroup w={265} name="Tasaus" pad={6} more>
      <Column $pad={7} $gap={7}>
        <Row>
          <Tool aria-label="Tasaa ylös"><AlignIcon k="t" /></Tool>
          <Tool $w={24} aria-label="Tasaa keskelle"><AlignIcon k="m" /></Tool>
          <Tool $on aria-label="Tasaa alas"><AlignIcon k="b" /></Tool>
          <Divider />
          <Tool aria-label="Suunta"><OrientIcon /></Tool>
          <Down />
        </Row>
        <Row>
          <Tool aria-label="Tasaa vasemmalle"><AlignIcon k="l" /></Tool>
          <Tool $w={24} aria-label="Keskitä"><AlignIcon k="c" /></Tool>
          <Tool aria-label="Tasaa oikealle"><AlignIcon k="r" /></Tool>
          <Divider />
          <Tool aria-label="Pienennä sisennystä"><IndentIcon out /></Tool>
          <Tool aria-label="Suurenna sisennystä"><IndentIcon /></Tool>
        </Row>
      </Column>
      <Divider $tall />
      <Column $pad={7} $gap={7} $left={1}>
        <SmallButton><WrapIcon />Rivitä teksti</SmallButton>
        <SmallButton><MergeIcon />Yhdistä ja keskitä<Down /></SmallButton>
      </Column>
    </RibbonGroup>

    <RibbonGroup w={143} name="Numero" pad={5} more>
      <Column $pad={7} $gap={7}>
        <Combo $w={134}><Select aria-label="Lukumuoto"><option>Yleinen</option></Select><Down /></Combo>
        <Row>
          <Tool $w={24} aria-label="Valuutta"><CurrencyIcon /></Tool>
          <Tool $w={12} aria-label="Valuutat"><Down /></Tool>
          <Tool $w={20}>%</Tool>
          <Tool $w={28}>000</Tool>
          <Divider />
          <Tool aria-label="Lisää desimaaleja"><DecIcon more /></Tool>
          <Tool aria-label="Vähennä desimaaleja"><DecIcon /></Tool>
        </Row>
      </Column>
    </RibbonGroup>

    <RibbonGroup w={582} name="Tyyli" pad={3}>
      <Big w={62} icon={<CondIcon />} a="Ehdollinen" b="muotoilu" />
      <Big w={69} icon={<TableIcon />} a="Muotoile" b="taulukoksi" />
      <Column $pad={2}>
        <Gallery>
          <Swatches>
            {STYLES.map((s) => (
              <SwatchButton key={s.n} $on={s.on}>
                <Swatch $bg={s.bg} $fg={s.fg} $edge={s.edge} $link={s.link} $bold={s.bold}>{s.n}</Swatch>
              </SwatchButton>
            ))}
          </Swatches>
          <GallerySide>
            <GalleryStep aria-label="Edellinen rivi"><Tri d="u" c="#c3d1e4" /></GalleryStep>
            <GalleryStep aria-label="Seuraava rivi"><Down /></GalleryStep>
            <GalleryStep aria-label="Lisää tyylejä"><svg width="7" height="1"><path d="M0 .5h7" stroke="#5a6678" /></svg><Down /></GalleryStep>
          </GallerySide>
        </Gallery>
      </Column>
    </RibbonGroup>

    <RibbonGroup w={145} name="Solut" pad={5}>
      <Big w={40} icon={<InsertIcon />} a="Lisää" />
      <Big w={44} icon={<DeleteIcon />} a="Poista" />
      <Big w={50} icon={<FormatIcon />} a="Muotoile" />
    </RibbonGroup>

    <RibbonGroup w={263} name="Muokkaaminen" pad={8}>
      <Column>
        <SmallButton><SmallIcon><Letter $size={16}>Σ</Letter></SmallIcon>Automaattinen summa<Down /></SmallButton>
        <SmallButton><SmallIcon><FillDownIcon /></SmallIcon>Täyttö<Down /></SmallButton>
        <SmallButton><SmallIcon><EraserIcon /></SmallIcon>Poista<Down /></SmallButton>
      </Column>
      <Big w={62} icon={<SortIcon />} a="Lajittele ja" b="suodata" />
      <Big w={42} icon={<FindIcon />} a="Etsi ja" b="valitse" />
    </RibbonGroup>

    <RibbonGroup w={91} name="Tekstintarkistus">
      <Big w={90} icon={<SpellIcon />} a="Oikeinkirjoitus" />
    </RibbonGroup>

    <RibbonGroup w={50} name="Päivitä">
      <Big w={49} icon={<CartIcon />} a="Osta" />
    </RibbonGroup>
  </RibbonBar>
);

const Grid = () => (
  <Sheet>
    <colgroup>
      <col style={{ width: 25 }} />
      {COLS.map((c, i) => <col key={c} style={{ width: i ? 64 : 301 }} />)}
      <col />
    </colgroup>
    <thead>
      <tr>
        <ColHead><svg width="25" height="17"><path d="M20 3v11H9z" fill="#a9bcd6" /></svg></ColHead>
        {COLS.map((c) => <ColHead key={c} $on={c === "O"}>{c}</ColHead>)}
        <ColHead />
      </tr>
    </thead>
    <tbody>
      {Array.from({ length: 41 }, (_, r) => {
        const row = ROWS[r];
        return (
          <tr key={r}>
            <RowHead $on={r === 18}>{r + 1}</RowHead>
            {COLS.map((c, i) => (
              <Cell key={c} $ink={!!row && i < 11} $inkRight={!!row && i < 11} $label={i === 0} $bold={row?.b && i === 0}>
                {row && (i === 0 ? row.t : row.v[i - 1])}
                {r === 18 && c === "O" && <Cursor />}
              </Cell>
            ))}
            <Cell />
          </tr>
        );
      })}
    </tbody>
  </Sheet>
);

export default function App() {
  return (
    <Window>
      <Global />
      <Chrome>
        <TitleRow>
          <QuickAccess>
            <ExcelIcon />
            <QuickSep />
            <Bare aria-label="Tallenna"><SaveIcon /></Bare>
            <Bare aria-label="Kumoa"><UndoIcon c="#3c6fd0" /></Bare>
            <Step aria-label="Kumoa useita"><Down c="#111" /></Step>
            <Bare aria-label="Tee uudelleen"><RedoIcon /></Bare>
            <Step aria-label="Tee uudelleen useita"><Down c="#98a2ac" /></Step>
            <QuickSep />
            <Bare aria-label="Mukauta"><svg width="7" height="8"><path d="M0 1.500h7" stroke="#111" /><path d="M0 4h7L3.500 8z" fill="#111" /></svg></Bare>
          </QuickAccess>
          <Title>{"uusittuAnalyysityokalu1.5  [Yhteensopiva tila]  -  Microsoft Excel Starter"}</Title>
          <WindowButtons>
            <WindowButton aria-label="Pienennä"><svg width="13" height="6"><rect x=".5" y=".5" width="11" height="4" fill="#fff" stroke="#4d5a63" /></svg></WindowButton>
            <WindowButton aria-label="Palauta"><svg width="12" height="11" fill="#fff" stroke="#4d5a63"><rect x="3.500" y=".5" width="8" height="7" /><rect x=".5" y="2.500" width="8" height="8" /><rect x="3.500" y="5.500" width="2" height="2" /></svg></WindowButton>
            <WindowButton $close aria-label="Sulje"><svg width="12" height="10"><path d="M2 1l8 8M10 1L2 9" stroke="#5b3530" strokeWidth="4" /><path d="M2 1l8 8M10 1L2 9" stroke="#fff" strokeWidth="2.500" /></svg></WindowButton>
          </WindowButtons>
        </TitleRow>
        <TabRow>
          <RibbonTab $kind="file">Tiedosto</RibbonTab>
          <RibbonTab $kind="active">Aloitus</RibbonTab>
          <RibbonTab>Lisää</RibbonTab>
          <RibbonTab>Sivun asettelu</RibbonTab>
          <RibbonTab>Kaavat</RibbonTab>
          <TabTools>
            <Bare aria-label="Pienennä valintanauha"><svg width="9" height="8" fill="#fff" stroke="#5a6678"><path d="M.5 4.500l4-4 4 4v2l-4-3-4 3z" /></svg></Bare>
            <Bare aria-label="Ohje"><svg width="16" height="16"><circle cx="8" cy="8" r="7.500" fill="#4a82d0" stroke="#2c5fa8" /><text x="8" y="12.500" textAnchor="middle" fontFamily="Open Sans" fontSize="12" fontWeight="700" fill="#fff">?</text></svg></Bare>
            <Bare aria-label="Pienennä työkirja"><svg width="11" height="6"><rect x=".5" y=".5" width="10" height="4" fill="#fff" stroke="#5a6678" /></svg></Bare>
            <Bare aria-label="Palauta työkirja"><svg width="12" height="12" fill="#fff" stroke="#5a6678"><rect x="4.500" y=".5" width="7" height="7" /><rect x=".5" y="3.500" width="7" height="7" /><rect x="3" y="6" width="2" height="2" /></svg></Bare>
            <Bare aria-label="Sulje työkirja"><svg width="12" height="10"><path d="M2 1l8 8M10 1L2 9" stroke="#5a6678" strokeWidth="4" /><path d="M2 1l8 8M10 1L2 9" stroke="#fff" strokeWidth="2" /></svg></Bare>
          </TabTools>
        </TabRow>
      </Chrome>

      <Ribbon />

      <FormulaBar>
        <NameBox>
          <NameInput aria-label="Nimiruutu" defaultValue="O19" />
          <Bare aria-label="Nimet"><Down c="#111" w={7} /></Bare>
        </NameBox>
        <FxArea><Knob /><Fx aria-label="Lisää funktio">fx</Fx></FxArea>
        <FormulaInput aria-label="Kaavarivi" />
        <Expand aria-label="Laajenna kaavarivi"><svg width="8" height="7"><path d="M1 1l3 4 3-4" fill="none" stroke="#4a5668" strokeWidth="2" /></svg></Expand>
      </FormulaBar>

      <Main>
        <Book>
          <SheetArea>
            <SheetView><Grid /></SheetView>
            <ScrollTrack>
              <SplitBox />
              <ScrollArrow aria-label="Vieritä ylös"><Tri d="u" /></ScrollArrow>
              <ScrollThumb><Grip /><Grip /><Grip /><Grip /></ScrollThumb>
              <ScrollArrow aria-label="Vieritä alas"><Tri d="d" /></ScrollArrow>
            </ScrollTrack>
          </SheetArea>
          <TabBar>
            <TabNav>
              <NavButton aria-label="Ensimmäinen"><svg width="8" height="8" fill="#4f6283"><path d="M0 0h1.500v8H0zM7 0v8L2.500 4z" /></svg></NavButton>
              <NavButton aria-label="Edellinen"><Tri d="l" c="#4f6283" /></NavButton>
              <NavButton aria-label="Seuraava"><Tri d="r" c="#4f6283" /></NavButton>
              <NavButton aria-label="Viimeinen"><svg width="8" height="8" fill="#4f6283"><path d="M6.500 0H8v8H6.500zM1 0v8l4.500-4z" /></svg></NavButton>
            </TabNav>
            <Tabs>
              {TABS.map((t, i) => (
                <SheetTab key={i} aria-label={t.n || "Edellinen taulukko"} $w={t.w} $c={t.c} $fg={t.fg} $from={t.from} $end={t.end} $active={t.active}>{t.n}</SheetTab>
              ))}
            </Tabs>
            <HScroll>
              <SplitBox $v />
              <ScrollArrow aria-label="Vieritä vasemmalle"><Tri d="l" /></ScrollArrow>
              <HThumb><Grip $v /><Grip $v /><Grip $v /><Grip $v /></HThumb>
              <ScrollArrow aria-label="Vieritä oikealle"><Tri d="r" /></ScrollArrow>
              <SplitBox $v />
            </HScroll>
            <Corner />
          </TabBar>
        </Book>

        <Pane>
          <PaneSection>
            <PaneTitle><SunIcon />Käytön aloittaminen</PaneTitle>
            <PaneLink href="#opas">Aloitusopas</PaneLink>
            <PaneLink href="#tuki">Ohje ja tuki</PaneLink>
          </PaneSection>
          <PaneSection>
            <PaneTitle><PlusIcon />Jatka</PaneTitle>
            <PaneLink href="#mallit">Hae ilmaisia malleja</PaneLink>
            <PaneLink href="#clipart">Lataa ClipArt-kuvia</PaneLink>
          </PaneSection>
          <PaneSection>
            <PaneTitle><SmallCartIcon />Lisää</PaneTitle>
            <PaneLink href="#hanki">Hanki Microsoft PowerPoint tai Microsoft Outlook</PaneLink>
          </PaneSection>
          <AdNote>Mainos</AdNote>
          <Ad>
            <AdBrand>Microsoft</AdBrand>
            <AdName><OfficeIcon />Office 365</AdName>
            <AdSub>Home Premium</AdSub>
            <AdButton>Buy it Today<GoIcon /></AdButton>
          </Ad>
        </Pane>
      </Main>

      <StatusBar>
        Valmis
        <StatusSep />
        <Views>
          <StatusSep />
          <Tool $on $w={20} aria-label="Normaali"><ViewIcon k={0} /></Tool>
          <Tool $w={19} aria-label="Sivun asettelu"><ViewIcon k={1} /></Tool>
          <Tool $w={19} aria-label="Sivunvaihdot"><ViewIcon k={2} /></Tool>
          <Percent>100%</Percent>
          <Bare aria-label="Loitonna"><ZoomIcon /></Bare>
          <Slider type="range" aria-label="Zoomaus" min={0} max={100} defaultValue={50} />
          <Bare aria-label="Lähennä"><ZoomIcon plus /></Bare>
        </Views>
      </StatusBar>
    </Window>
  );
}
